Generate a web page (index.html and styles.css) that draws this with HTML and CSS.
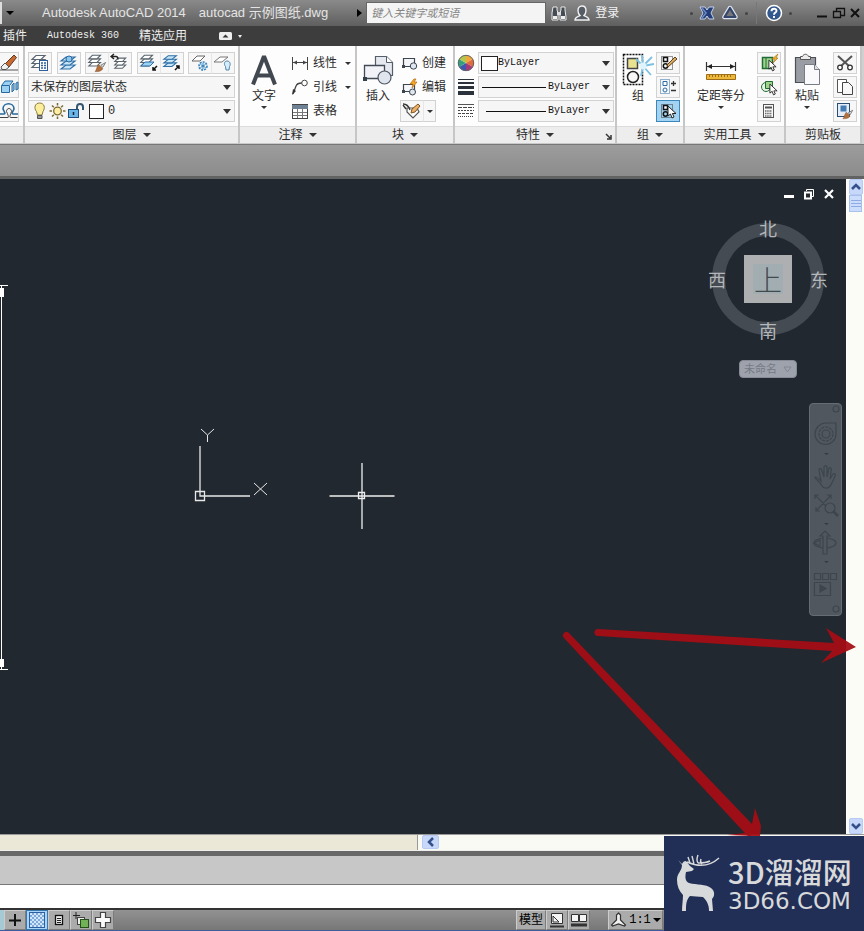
FILE: index.html
```html
<!DOCTYPE html>
<html lang="zh-CN">
<head>
<meta charset="utf-8">
<title>Autodesk AutoCAD 2014</title>
<link rel="stylesheet" href="styles.css">
</head>
<body>
<svg class="defs" aria-hidden="true">
  <symbol id="layers" viewBox="0 0 20 20"><g fill="#fff" stroke="#5a646e" stroke-width="1.2"><path d="M2 14.500h9l4-4H6z"/><path d="M2 10.500h9l4-4H6z"/><path d="M2 6.500h9l4-4H6z"/></g></symbol>
  <symbol id="layers-blue" viewBox="0 0 20 20"><g fill="#c5e4f8" stroke="#2f6fa5" stroke-width="1.200"><path d="M2 15h9l5-4H7z"/><path d="M2 11h9l5-4H7z"/><path d="M2 7h9l5-4H7z"/></g></symbol>
  <symbol id="brush" viewBox="0 0 20 20"><path d="M11 9l3 3 4-7z" fill="#ddd" stroke="#555"/><path d="M8 8l6 6c-2 4-7 4-11 4 2-2 2-6 5-10z" fill="#b3703c" stroke="#7c4a22" stroke-width=".7"/></symbol>
  <symbol id="cursor" viewBox="0 0 10 14"><path d="M1 1v10l2.500-2L5 13l2-1-1.600-3.500H9z" fill="#fff" stroke="#222"/></symbol>
</svg>

<header class="titlebar">
  <span class="sliver"></span>
  <button class="plain quick" aria-label="自定义快速访问工具栏"><i class="tri black"></i></button>
  <h1 class="app-title"><span>Autodesk AutoCAD 2014</span><span>autocad 示例图纸.dwg</span></h1>
  <i class="tri-right"></i>
  <input class="search" type="text" placeholder="键入关键字或短语" aria-label="搜索">
  <button class="plain tool" aria-label="查找"><svg width="18" height="18" viewBox="0 0 18 18"><path d="M3 3h4v3l1 3v7H2V9zM11 3h4v3l1 7v3h-6V9l1-3z" fill="#444b55" stroke="#e8e8e8"/><path d="M7 8h4v3H7z" fill="#ddd"/><path d="M3 12h4v3H3zM11 12h4v3h-4z" fill="#eee"/></svg></button>
  <button class="plain login"><svg width="16" height="18" viewBox="0 0 16 18"><path d="M8 2c3 0 4 2 4 4.500S10.500 11 10 11.500c2 1 5 1.500 5 4.500H1c0-3 3-3.500 5-4.500C5.500 11 4 9 4 6.500S5 2 8 2z" fill="#555c66" stroke="#f0f0f0" stroke-width="1.400"/></svg>登录</button>
  <div class="window-tools">
    <i class="dot"></i>
    <button class="plain tool" aria-label="Exchange"><svg width="16" height="16" viewBox="0 0 16 16"><path d="M1 2h5l2 3 2-3h5l-3 6 3 6h-5l-2-3-2 3H1l3-6z" fill="#243e78" stroke="#c4d0ea"/><path d="M3 3l4 5-4 5" fill="none" stroke="#6f8bc6" stroke-width="1.500"/></svg></button>
    <button class="plain tool" aria-label="保持连接"><svg width="18" height="16" viewBox="0 0 18 16"><path d="M9 3L3.500 12h11z" fill="none" stroke="#dfe5f0" stroke-width="4.500" stroke-linejoin="round"/><path d="M9 3L3.500 12h11z" fill="#777" stroke="#34466b" stroke-width="2.200" stroke-linejoin="round"/></svg></button>
    <i class="dot"></i>
    <i class="divider"></i>
    <button class="plain tool" aria-label="帮助"><svg width="18" height="18" viewBox="0 0 18 18"><circle cx="9" cy="9" r="7.500" fill="#31578d" stroke="#fff" stroke-width="1.500"/><path d="M6.500 7.200C6.500 3.800 11.700 4 11.500 7c-.1 1.600-2.500 1.700-2.500 3.700M9 12v2" fill="none" stroke="#fff" stroke-width="1.900"/></svg></button>
    <i class="dot"></i>
    <div class="window-buttons">
      <button class="plain" aria-label="最小化"><svg width="12" height="14" viewBox="0 0 12 14"><path d="M1 10.500h10" stroke="#111" stroke-width="2"/></svg></button>
      <button class="plain" aria-label="还原"><svg width="14" height="14" viewBox="0 0 14 14"><path d="M4.500 5V2.500h8v7H9M1.500 5.500h7v6h-7z" fill="none" stroke="#111" stroke-width="1.300"/></svg></button>
      <button class="plain" aria-label="关闭"><svg width="10" height="14" viewBox="0 0 10 14"><path d="M1 3l8 8M9 3l-8 8" stroke="#111" stroke-width="2"/></svg></button>
    </div>
  </div>
</header>

<nav class="tabs">
  <a href="#plugins">插件</a>
  <a href="#a360" class="mono">Autodesk 360</a>
  <a href="#apps">精选应用</a>
  <button class="plain collapse" aria-label="最小化功能区"><svg width="13" height="8" viewBox="0 0 13 8"><rect width="13" height="8" rx="1.500" fill="#eee"/><path d="M3.500 5.500h6l-3-3z" fill="#333"/></svg><i class="tri white"></i></button>
</nav>

<main class="ribbon">
  <section class="panel clipped">
    <div class="body">
      <div class="rows">
        <button class="tile" aria-label="删除"><svg width="20" height="20" viewBox="0 0 20 20"><path d="M0 17h19" stroke="#555"/><path d="M6 11l9-9 2.500 2.500L10 14z" fill="#c9682f" stroke="#5d3a24"/><path d="M2 14l4-4 4 4-3 2.500H3z" fill="#f2f2f2" stroke="#555"/></svg></button>
        <button class="tile" aria-label="三维"><svg width="20" height="20" viewBox="0 0 20 20"><path d="M2.500 8.500h8v7h-8zM3 8l3-4h8l-3 4" fill="#9bd0f3" stroke="#27699d"/><path d="M13 8l2-2v7l-2 2zM17 6l2-1v7l-2 1z" fill="#9bd0f3" stroke="#27699d"/></svg></button>
        <button class="tile" aria-label="偏移"><svg width="20" height="20" viewBox="0 0 20 20"><path d="M0 13h5c2 0 0-3-1-5 0-7 11-7 11 0-1 2-3 5-1 5h5" fill="none" stroke="#27699d" stroke-width="1.600"/><path d="M0 16.500h9c1 0 0-3-1.500-6 0-4 5-4 5 0-1 3-2.500 6-1 6h7" fill="none" stroke="#444"/></svg></button>
      </div>
    </div>
    <h2 class="caption"></h2>
  </section>

  <section class="panel">
    <div class="body">
      <div class="rows">
        <div class="layer-tools">
          <button class="tile" aria-label="图层特性"><svg width="20" height="20" viewBox="0 0 20 20"><use href="#layers" width="20" height="20"/><rect x="9.500" y="7.500" width="8" height="10" fill="#fff" stroke="#2f5f99"/><path d="M11 10h2m1 0h2M11 12.500h2m1 0h2M11 15h2m1 0h2" stroke="#2f5f99" stroke-width="1.300"/></svg></button>
          <button class="tile" aria-label="置为当前"><svg width="20" height="20" viewBox="0 0 20 20"><use href="#layers-blue" width="20" height="20" y="1"/><circle cx="10" cy="6" r="3" fill="#8cc7ef" stroke="#2b689c"/></svg></button>
          <span class="pair"><button class="tile" aria-label="匹配图层"><svg width="20" height="20" viewBox="0 0 20 20"><use href="#layers" width="18" height="18"/><use href="#brush" x="6" y="6" width="14" height="14"/></svg></button><button class="tile" aria-label="上一个"><svg width="20" height="20" viewBox="0 0 20 20"><use href="#layers" x="3" y="3" width="17" height="17"/><path d="M1 3.500h5q2 0 2 3M4 1L1 3.500 4 6" fill="none" stroke="#222" stroke-width="1.400"/></svg></button></span>
          <span class="pair"><button class="tile" aria-label="隔离"><svg width="20" height="20" viewBox="0 0 20 20"><use href="#layers" width="18" height="18"/><path d="M2 13h9l4-4H6z" fill="#9bd2f5" stroke="#2f6fa5"/><path d="M18 13l-4 4m0-3v3h3" fill="none" stroke="#111" stroke-width="1.500"/></svg></button><button class="tile" aria-label="取消隔离"><svg width="20" height="20" viewBox="0 0 20 20"><use href="#layers-blue" width="18" height="18"/><path d="M13 17l4-4m0 3v-3h-3" fill="none" stroke="#111" stroke-width="1.500"/></svg></button></span>
          <span class="pair"><button class="tile" aria-label="冻结"><svg width="20" height="20" viewBox="0 0 20 20"><path d="M2 8h8l5-5H7z" fill="#fff" stroke="#666"/><circle cx="13" cy="13" r="4" fill="#e4f4ff" stroke="#3a82b8" stroke-width="1.600" stroke-dasharray="2 1"/><path d="M13 10v6M10.500 11.500l5 3M15.500 11.500l-5 3" stroke="#3a82b8"/></svg></button><button class="tile" aria-label="关闭图层"><svg width="20" height="20" viewBox="0 0 20 20"><path d="M1 9h8l6-5H7z" fill="#fff" stroke="#777"/><path d="M14 8c3 0 4 3 2.500 5.500L16 17h-3l-.5-3.500C10.500 11 11.500 8 14 8z" fill="#d5edfc" stroke="#5685a8"/></svg></button></span>
        </div>
        <div class="combo"><select aria-label="图层状态"><option>未保存的图层状态</option></select></div>
        <div class="combo">
          <svg width="17" height="20" viewBox="0 0 17 20"><path d="M8.500 2c5 0 6 5 3.500 8.500L11 14H6.500L5.500 10.500C2.500 7 4 2 8.500 2z" fill="#fbee9c" stroke="#8a7a3a"/><path d="M6.500 14.500h4.500v3H6.500z" fill="#999" stroke="#555"/></svg>
          <svg width="19" height="20" viewBox="0 0 19 20"><circle cx="9.500" cy="10" r="3.800" fill="#fdeea4" stroke="#7d6a33" stroke-width="1.300"/><path d="M9.500 2v2.500M9.500 15.500V18M1.500 10H4M15 10h2.500M4 4.500l1.800 1.800M13.200 13.700L15 15.500M15 4.500l-1.800 1.800M5.800 13.700L4 15.500" stroke="#7d6a33" stroke-width="1.500"/></svg>
          <svg width="18" height="20" viewBox="0 0 18 20"><path d="M10 9V6c0-4 6-4 6 0v3" fill="none" stroke="#35566f" stroke-width="2"/><rect x="1.500" y="8.500" width="10" height="8" fill="#6bb5e8" stroke="#1f4f78"/><path d="M6.500 11v3" stroke="#123" stroke-width="1.500"/></svg>
          <span class="swatch"></span>
          <select class="mono big" aria-label="图层"><option>0</option></select>
        </div>
      </div>
    </div>
    <h2 class="caption">图层<i class="tri"></i></h2>
  </section>

  <section class="panel">
    <div class="body annotate">
      <button class="plain large"><svg width="30" height="34" viewBox="0 0 30 34"><path d="M4 32.500L14.500 5.500h1L26 32.500M8.500 23.500h13" fill="none" stroke="#42484f" stroke-width="4"/></svg>文字<i class="tri tiny"></i></button>
      <div class="rows">
        <button class="plain line"><svg width="18" height="18" viewBox="0 0 18 18"><path d="M1.500 3v13M16.500 3v13M2 8.500h14" stroke="#444"/><path d="M2 8.500l4-2v4zM16 8.500l-4-2v4z" fill="#444"/></svg>线性<i class="tri tiny"></i></button>
        <button class="plain line"><svg width="18" height="18" viewBox="0 0 18 18"><path d="M2 16L5 8q1-3 6-3" fill="none" stroke="#444" stroke-width="1.300"/><circle cx="13.500" cy="5" r="2.800" fill="#fff" stroke="#444"/><path d="M1 17l1-6 3 2z" fill="#333"/></svg>引线<i class="tri tiny"></i></button>
        <button class="plain line"><svg width="18" height="18" viewBox="0 0 18 18"><rect x="1.500" y="2.500" width="15" height="14" fill="#fff" stroke="#444"/><path d="M1 3h16v4H1z" fill="#6e8195"/><path d="M2 10.500h14M2 13.500h14M6.500 7v9M11.500 7v9" stroke="#777"/></svg>表格</button>
      </div>
    </div>
    <h2 class="caption">注释<i class="tri"></i></h2>
  </section>

  <section class="panel">
    <div class="body block">
      <button class="plain large"><svg width="34" height="34" viewBox="0 0 34 34"><path d="M14.500 4.500h11l6 6v13h-17z" fill="#e7e9f1" stroke="#555e68" stroke-width="1.200"/><path d="M25.500 4.500v6h6" fill="#fff" stroke="#555e68"/><path d="M3.500 13.500h20v13h-20z" fill="#f2f3f8" stroke="#424b55" stroke-width="1.300"/><circle cx="23.500" cy="25.500" r="6.500" fill="#e1e5ee" stroke="#4e5864" stroke-width="1.200"/><path d="M2 25h4v4H2z" fill="#34404c"/></svg>插入</button>
      <div class="rows">
        <button class="plain line"><svg width="18" height="18" viewBox="0 0 18 18"><path d="M3.500 4.500h11v8h-11z" fill="#f4f6fa" stroke="#3c4650" stroke-width="1.200"/><circle cx="13.500" cy="12" r="3.200" fill="#dfe6ef" stroke="#3c4650"/><path d="M2 11h3v3H2z" fill="#3c4650"/></svg>创建</button>
        <button class="plain line"><svg width="18" height="18" viewBox="0 0 18 18"><path d="M3.500 6.500h11v7h-11z" fill="#f4f6fa" stroke="#3c4650" stroke-width="1.200"/><circle cx="12.500" cy="14" r="3" fill="#dfe6ef" stroke="#3c4650"/><path d="M2 12h3v3H2z" fill="#3c4650"/><path d="M14 1l-4 5h3l-1 4 5-6h-3l2-3z" fill="#f7a928" stroke="#b56b10" stroke-width=".7"/></svg>编辑</button>
        <span class="pair"><button class="tile" aria-label="编辑属性"><svg width="20" height="20" viewBox="0 0 20 20"><path d="M5 7h10l2 4-6 6-6-6z" fill="#fff" stroke="#555" stroke-width="1.200"/><path d="M1 3q5 0 7 6M1 4l3 4" fill="none" stroke="#333" stroke-width="1.300"/><path d="M9 12l1-4 6-5 2 2-5 6z" fill="#e9b06b" stroke="#85521d"/></svg></button><button class="tile narrow" aria-label="更多"><i class="tri tiny"></i></button></span>
      </div>
    </div>
    <h2 class="caption">块<i class="tri"></i></h2>
  </section>

  <section class="panel">
    <div class="body rows props">
      <div class="prop"><svg width="18" height="20" viewBox="0 0 18 20"><g transform="translate(9 11)"><path d="M0 0V-8A8 8 0 0 1 7-4z" fill="#f0a83c"/><path d="M0 0L7-4A8 8 0 0 1 7 4z" fill="#e36b36"/><path d="M0 0l7 4a8 8 0 0 1-7 4z" fill="#a63a78"/><path d="M0 0v8a8 8 0 0 1-7-4z" fill="#3e58b0"/><path d="M0 0l-7 4a8 8 0 0 1 0-8z" fill="#33a17c"/><path d="M0 0l-7-4A8 8 0 0 1 0-8z" fill="#b3c64b"/><circle r="7.700" fill="none" stroke="#62656d"/></g></svg><div class="combo"><span class="swatch"></span><select class="mono" aria-label="颜色"><option>ByLayer</option></select></div></div>
      <div class="prop"><svg width="18" height="20" viewBox="0 0 18 20"><path d="M1 3.500h16" stroke="#2c323b"/><path d="M1 7h16" stroke="#2c323b" stroke-width="2"/><path d="M1 11.500h16" stroke="#2c323b" stroke-width="3"/><path d="M1 17h16" stroke="#2c323b" stroke-width="4"/></svg><div class="combo"><span class="stroke"></span><select class="mono" aria-label="线宽"><option>ByLayer</option></select></div></div>
      <div class="prop"><svg width="18" height="20" viewBox="0 0 18 20"><path d="M1 4.500h16" stroke="#555"/><path d="M1 7.500h16" stroke="#444" stroke-dasharray="4 1"/><path d="M1 10.500h16" stroke="#444" stroke-dasharray="2 1"/><path d="M1 13.500h16" stroke="#444" stroke-dasharray="3 1"/><path d="M1 16.500h16" stroke="#444" stroke-dasharray="1 1"/></svg><div class="combo"><span class="stroke inset"></span><select class="mono" aria-label="线型"><option>ByLayer</option></select></div></div>
    </div>
    <h2 class="caption">特性<i class="tri"></i><svg class="launcher" width="7" height="7" viewBox="0 0 7 7"><path d="M1 1l4 4M6 2v4H2" fill="none" stroke="#333" stroke-width="1.500"/></svg></h2>
  </section>

  <section class="panel">
    <div class="body split">
      <button class="plain large"><svg width="32" height="34" viewBox="0 0 32 34"><path d="M1.500 2.500h19v30h-19z" fill="none" stroke="#111" stroke-width="1.500" stroke-dasharray="2 1"/><rect x="5.500" y="6.500" width="10" height="10" fill="#e8e291" stroke="#444" stroke-width="1.500"/><circle cx="11" cy="25" r="5.500" fill="#f7f7f7" stroke="#222" stroke-width="1.500"/><path d="M21 14l9-9M21 14l11-2M21 14l8 9M21 14l-1-11M21 14l-2 10M21 14l-7-7" stroke="#7cc0e2" stroke-width="1.800"/><circle cx="21" cy="14" r="3.500" fill="#dff4fd"/></svg>组</button>
      <div class="rows">
        <button class="tile" aria-label="取消编组"><svg width="20" height="20" viewBox="0 0 20 20"><path d="M3.500 3.500h11v13h-11z" fill="none" stroke="#333" stroke-dasharray="1 1"/><path d="M5.500 4.500h4v4h-4z" fill="#fff" stroke="#111" stroke-width="1.500"/><circle cx="7.500" cy="13" r="2.200" fill="none" stroke="#111" stroke-width="1.500"/><path d="M9 12L17 4l2 2-9 8z" fill="#d9ab63" stroke="#5e421d"/></svg></button>
        <button class="tile" aria-label="组编辑"><svg width="20" height="20" viewBox="0 0 20 20"><path d="M2.500 2.500h9v14h-9z" fill="none" stroke="#2c6ba3" stroke-dasharray="1 1"/><path d="M5 4.500h4v4H5z" fill="#fff" stroke="#2c6ba3"/><circle cx="7" cy="13" r="2" fill="none" stroke="#2c6ba3"/><path d="M13 6.500h5M15.500 4v5M13 13.500h5" stroke="#333" stroke-width="1.300"/></svg></button>
        <button class="tile active" aria-label="启用组选择"><svg width="20" height="20" viewBox="0 0 20 20"><path d="M3.500 3.500h11v13h-11z" fill="none" stroke="#333" stroke-dasharray="1 1"/><path d="M5.500 4.500h4v4h-4z" fill="#fff" stroke="#111" stroke-width="1.500"/><circle cx="7.500" cy="13" r="2.200" fill="none" stroke="#111" stroke-width="1.500"/><use href="#cursor" x="9" y="4" width="10" height="14"/></svg></button>
      </div>
    </div>
    <h2 class="caption">组<i class="tri"></i></h2>
  </section>

  <section class="panel">
    <div class="body split">
      <button class="plain large wide"><svg width="34" height="34" viewBox="0 0 34 34"><path d="M2.500 10v9M31.500 10v9M3 14.500h28" stroke="#333" stroke-width="1.200"/><path d="M3 14.500l5-2.500v5zM31 14.500l-5-2.500v5z" fill="#222"/><path d="M2.500 22.500h29v5h-29z" fill="#ecb73b" stroke="#9d6d18"/><path d="M5.500 23v2m3-2v2m3-2v2m3-2v2m3-2v2m3-2v2m3-2v2m3-2v2" stroke="#99701e"/></svg>定距等分<i class="tri tiny"></i></button>
      <div class="rows">
        <button class="tile" aria-label="快速选择"><svg width="20" height="20" viewBox="0 0 20 20"><path d="M3.500 4.500h10v11h-10z" fill="#9ed38c" stroke="#236b36" stroke-width="1.500"/><path d="M7 5v10" stroke="#236b36"/><use href="#cursor" x="9" y="6" width="9" height="13"/><path d="M19 1l-6 5h3l-2 4 5-5h-2z" fill="#f5b32d" stroke="#a66c12" stroke-width=".6"/></svg></button>
        <button class="tile" aria-label="全部选择"><svg width="20" height="20" viewBox="0 0 20 20"><circle cx="7" cy="10" r="4.500" fill="#e5f4df" stroke="#236b36"/><path d="M6.500 4.500h7v7h-7z" fill="#9ed38c" stroke="#236b36"/><use href="#cursor" x="10" y="6" width="9" height="13"/></svg></button>
        <button class="tile" aria-label="计算器"><svg width="20" height="20" viewBox="0 0 20 20"><rect x="4.500" y="3.500" width="10" height="13" fill="#f8f8f8" stroke="#555"/><path d="M6 6.500h7" stroke="#555" stroke-width="2"/><path d="M6 10h7M6 12.500h7M6 15h7" stroke="#666" stroke-width="1.300" stroke-dasharray="1.500 .7"/></svg></button>
      </div>
    </div>
    <h2 class="caption">实用工具<i class="tri"></i></h2>
  </section>

  <section class="panel">
    <div class="body split">
      <button class="plain large"><svg width="30" height="34" viewBox="0 0 30 34"><path d="M3.500 5.500h20v25h-20z" fill="#9a9da3" stroke="#4c4f55" stroke-width="1.200"/><path d="M8.500 7.500v-3h2c1-3 5-3 6 0h2v3z" fill="#ececec" stroke="#555"/><path d="M12.500 12.500h10l5 5v15h-15z" fill="#fafafc" stroke="#777c85"/><path d="M22.500 12.500v5h5" fill="#dfe1e6" stroke="#777c85"/></svg>粘贴<i class="tri tiny"></i></button>
      <div class="rows">
        <button class="tile" aria-label="剪切"><svg width="20" height="20" viewBox="0 0 20 20"><path d="M3 3l11 10M17 3L6 13" stroke="#555" stroke-width="2"/><circle cx="5" cy="14.500" r="2.300" fill="#fff" stroke="#333" stroke-width="1.300"/><circle cx="15" cy="14.500" r="2.300" fill="#fff" stroke="#333" stroke-width="1.300"/></svg></button>
        <button class="tile" aria-label="复制"><svg width="20" height="20" viewBox="0 0 20 20"><path d="M2.500 2.500h9v13h-9z" fill="#fff" stroke="#555"/><path d="M7.500 5.500h6l4 4v8h-10z" fill="#f8f8f8" stroke="#444"/></svg></button>
        <button class="tile" aria-label="特性匹配"><svg width="20" height="20" viewBox="0 0 20 20"><rect x="2.500" y="2.500" width="12" height="13" fill="#e5eef8" stroke="#2a4d75"/><rect x="5.500" y="4.500" width="6" height="6" fill="#447bb3"/><use href="#brush" x="5" y="6" width="15" height="13"/></svg></button>
      </div>
    </div>
    <h2 class="caption">剪贴板</h2>
  </section>
</main>

<div class="shelf"></div>

<div class="workspace">
  <div class="canvas">
    <svg class="dimension" width="9" height="388" viewBox="0 0 9 388"><path d="M0 1.500h8M0 385.500h8M1.500 1v385" stroke="#fff"/><path d="M0 13h4V4H0zM0 375h4v8H0z" fill="#fff"/></svg>
    <svg class="ucs" width="80" height="78" viewBox="0 0 80 78"><g fill="none" stroke="#e8e8e8"><path d="M8 20v50h50M3.500 65.500h9v9h-9z" stroke-width="1.300"/><path d="M9 3l6.500 6L22 3M15.500 9v7M62 57l13 12M75 57L62 69"/></g></svg>
    <svg class="crosshair" width="66" height="66" viewBox="0 0 66 66"><path d="M.5 33h65M33 0v66M29.500 29.500h6v6h-6z" fill="none" stroke="#eee" stroke-width="1.300"/></svg>

    <div class="doc-buttons">
      <button class="plain" aria-label="最小化图形"><svg width="12" height="12" viewBox="0 0 12 12"><path d="M1 7h10v3H1z" fill="#fff"/></svg></button>
      <button class="plain" aria-label="还原图形"><svg width="12" height="12" viewBox="0 0 12 12"><path d="M3.500 3V1.500h7v7H9" fill="none" stroke="#fff"/><path d="M2 4.500h6v6H2z" fill="none" stroke="#fff" stroke-width="2"/></svg></button>
      <button class="plain" aria-label="关闭图形"><svg width="12" height="12" viewBox="0 0 12 12"><path d="M2 2l8 8M10 2l-8 8" stroke="#fff" stroke-width="2.200"/></svg></button>
    </div>

    <div class="viewcube">
      <div class="ring"></div>
      <span class="north">北</span><span class="west">西</span><button class="plain face">上</button><span class="east">东</span><span class="south">南</span>
    </div>
    <button class="ucs-name">未命名 <svg width="9" height="7" viewBox="0 0 9 7"><path d="M1 1h7L4.500 6z" fill="none" stroke="#828791"/></svg></button>

    <div class="navbar">
      <svg width="31" height="211" viewBox="0 0 31 211"><g fill="none" stroke="#3d454d" stroke-width="1.200"><circle cx="26" cy="5" r="3"/><path d="M5 30a11 11 0 0 1 11-11h10v11a10.500 10.500 0 0 1-21 0z"/><circle cx="16" cy="30" r="7" stroke-dasharray="3 1"/><circle cx="16" cy="30" r="4"/><path d="M12 82c-2-5-6-5-7-9 3 0 5 3 6 4l-2-11c0-2 2-2 3 1l2 6V63c1-2 3-2 3 1v9l2-9c2-1 3 1 2 3l-1 8 3-5c2-1 3 0 2 2-2 4-3 9-6 11-2 2-6 1-7-1z"/><path d="M5 91l15 15M21 91L6 107M5 95v-4h4M17 91h4v4M6 103v4h4"/><circle cx="20" cy="104" r="5" fill="#50575e"/><path d="M23 107l5 5" stroke-width="2.500"/><ellipse cx="15" cy="139" rx="11" ry="5"/><path d="M13 150v-18h-3l5-5 5 5h-3v18z" fill="#50575e"/><path d="M4 139l6-3v6z"/><path d="M4.500 169.500h6v6h-6zM12.500 169.500h6v6h-6zM20.500 169.500h6v6h-6zM4.500 178.500h16v13h-16z"/><path d="M10 181v7l6-3.500z" fill="#3d454d"/><circle cx="26" cy="205" r="3"/></g><path d="M14 49h5l-2.500 2zM14 119h5l-2.500 2zM14 157h5l-2.500 2z" fill="#343b42"/></svg>
    </div>
  </div>
  <div class="vscroll">
    <button class="plain cap" aria-label="向上滚动"><svg width="12" height="12" viewBox="0 0 12 12"><path d="M2 8l4-4 4 4" fill="none" stroke="#34518a" stroke-width="2.500"/></svg></button>
    <button class="plain thumb" aria-label="滚动条"><svg width="10" height="10" viewBox="0 0 10 10"><path d="M0 1.500h10M0 4.500h10M0 7.500h10" stroke="#8fabe3"/></svg></button>
    <button class="plain cap last" aria-label="向下滚动"><svg width="12" height="12" viewBox="0 0 12 12"><path d="M2 4l4 4 4-4" fill="none" stroke="#34518a" stroke-width="2.500"/></svg></button>
  </div>
</div>

<div class="hscroll">
  <div class="sheet-tabs"></div>
  <div class="track"><button class="plain cap" aria-label="向左滚动"><svg width="12" height="12" viewBox="0 0 12 12"><path d="M8 2L4 6l4 4" fill="none" stroke="#34518a" stroke-width="2.500"/></svg></button></div>
</div>

<div class="history"></div>
<input class="command" type="text" aria-label="命令行">

<footer class="status">
  <span class="edge"></span>
  <button class="cell" aria-label="正交"><svg width="18" height="18" viewBox="0 0 18 18"><path d="M3 9.500h12M9 3v12" stroke="#111" stroke-width="2"/></svg></button>
  <button class="cell on" aria-label="透明度"><svg width="18" height="18" viewBox="0 0 18 18"><rect x="1.500" y="1.500" width="15" height="15" fill="#cfe5fb" stroke="#2b5fa0"/><path d="M2 6l4-4M2 10l8-8M2 14l12-12M4 16L16 4M8 16l8-8M12 16l4-4M2 12l4 4M2 8l8 8M2 4l12 12M4 2l12 12M8 2l8 8M12 2l4 4" stroke="#80a9d8"/></svg></button>
  <button class="cell" aria-label="快捷特性"><svg width="18" height="18" viewBox="0 0 18 18"><rect x="5.500" y="4.500" width="7" height="9" fill="#eee" stroke="#111" stroke-width="1.300"/><path d="M7 7.500h4M7 9.500h4M7 11.500h4" stroke="#222"/></svg></button>
  <button class="cell" aria-label="选择循环"><svg width="18" height="18" viewBox="0 0 18 18"><path d="M4 1v7M1 4.500h7" stroke="#222"/><rect x="5.500" y="6.500" width="7" height="7" fill="#eee" stroke="#444"/><rect x="8.500" y="8.500" width="8" height="8" fill="#72b257" stroke="#254f1d"/></svg></button>
  <button class="cell" aria-label="注释监视器"><svg width="18" height="18" viewBox="0 0 18 18"><path d="M6.500 1.500h5v5h5v5h-5v5h-5v-5h-5v-5h5z" fill="#fafafa" stroke="#444" stroke-width="1.200"/></svg></button>
  <div class="right-cells">
    <button class="cell model">模型</button>
    <button class="cell" aria-label="布局"><svg width="18" height="18" viewBox="0 0 18 18"><path d="M3.500 2.500h11v10h-11z" fill="#f5f5f5" stroke="#333"/><path d="M5 5l6 6H5z" fill="none" stroke="#333"/><path d="M2 15.500h14" stroke="#333" stroke-width="2"/></svg></button>
    <button class="cell" aria-label="快速查看"><svg width="18" height="18" viewBox="0 0 18 18"><path d="M1.500 3.500h7v7h-7zM9.500 3.500h7v7h-7z" fill="#f5f5f5" stroke="#333"/><path d="M1 14h16" stroke="#333" stroke-width="3"/></svg></button>
    <button class="cell scale"><svg width="17" height="18" viewBox="0 0 17 18"><path d="M8.500 2l2 2v5l5 5-1 1-6-2-6 2-1-1 5-5V4z" fill="#f0f0f0" stroke="#333" stroke-width="1.200"/></svg>1:1<i class="tri black"></i></button>
  </div>
</footer>

<svg class="pointers" width="304" height="216" viewBox="0 0 304 216" aria-hidden="true"><g fill="#a50d14" fill-opacity=".94"><path d="M9 13a3.500 3.500 0 0 0-5 5L183 211l5 5h12l1-10-6-18-3 16z"/><path d="M167 215l18-2 8 3z"/><path d="M38 9a3.500 3.500 0 0 0 0 7l234 15-11 12 35-16-30-19 8 15z"/></g></svg>

<aside class="brand">
  <svg width="60" height="75" viewBox="0 0 60 75"><path d="M10 14l4 4c1-2 2-3 4-3l4 5 4 3-2 2-6 1c-1 5-1 9 3 11 8 2 17 1 22 5 4 3 4 8 1 11l1 12h-4c0-6-2-10-6-14-5 0-9-1-13-1-4 4-4 9-4 15h-4c0-6 1-11 1-16-4-4-6-9-6-15 0-7 5-9 5-15z" fill="#d8d9da"/><path d="M19 16c9 4 21 6 32-4M22 17l-2-6M26 18l-2-8M30 17c-2-3-1-5 0-8M34 18c-2-2-2-3-1-5M30 17c4 0 8 0 12-2" fill="none" stroke="#d8d9da" stroke-width="1.400"/></svg>
  <div class="brand-text"><strong>3D溜溜网</strong><span>3D66.COM</span></div>
</aside>
</body>
</html>
```
FILE: styles.css
```css
* { box-sizing: border-box; }

body {
  margin: 0;
  min-height: 100vh;
  display: flex;
  flex-direction: column;
  position: relative;
  overflow-x: hidden;
  background: #6b6b6b;
  color: #2c2c2c;
  font: 12px/16px "Liberation Sans", "Noto Sans CJK SC", sans-serif;
}

button, input, select { font: inherit; color: inherit; margin: 0; border-radius: 0; }
svg { display: block; flex: none; }
.defs { position: absolute; width: 0; height: 0; }

.plain {
  padding: 0;
  border: 0;
  background: none;
  display: flex;
  align-items: center;
}

.mono { font-family: "Liberation Mono", "Noto Sans CJK SC", monospace; font-size: 10px; }

.tri {
  border: 4px solid transparent;
  border-top: 4px solid #333;
  border-bottom: 0;
}
.tri.black { border-top-color: #000; }
.tri.white { border-width: 3px 2px 0; border-top-color: #eee; }
.tri.tiny { border-width: 3px 3px 0; }
.tri-right { border: 4px solid transparent; border-left: 5px solid #000; border-right: 0; }

/* Title bar */
.titlebar {
  height: 26px;
  display: flex;
  align-items: center;
  background: linear-gradient(#8a8a8a, #5f5f5f);
}
.sliver { width: 2px; height: 22px; background: #ddd; }
.quick { padding: 0 4px; }
.app-title {
  margin: 0 29px 0 24px;
  display: flex;
  gap: 13px;
  color: #e4e4e4;
  font-size: 13px;
  font-weight: 400;
  white-space: nowrap;
}
.search {
  width: 180px;
  height: 22px;
  margin: 0 4px;
  padding: 0 4px;
  border: 1px solid #666;
  background: #f4f4f4;
  font-size: 11px;
  font-style: italic;
}
.search::placeholder { color: #858585; }
.tool { flex: none; }
.login { margin-left: 6px; gap: 5px; color: #f2f2f2; white-space: nowrap; }
.window-tools {
  margin-left: auto;
  padding-right: 4px;
  display: flex;
  align-items: center;
  gap: 6px;
}
.dot { width: 3px; height: 3px; border-radius: 2px; background: #444; }
.divider { width: 1px; height: 22px; margin: 0 2px; background: #777; }
.window-buttons { margin-left: 18px; display: flex; gap: 4px; }

/* Tab strip */
.tabs {
  height: 20px;
  padding-left: 3px;
  display: flex;
  align-items: center;
  gap: 20px;
  background: #3d3d3d;
  color: #eee;
}
.tabs a { color: inherit; text-decoration: none; }
.collapse { margin-left: 12px; gap: 6px; }

/* Ribbon */
.ribbon {
  padding-right: 2px;
  display: grid;
  grid-template-columns: 25fr 215fr 117fr 98fr 162fr 68fr 101fr 76fr;
  background: #d0d0d0;
}
.panel {
  min-width: 0;
  overflow: hidden;
  border-right: 2px solid #c6c6c6;
  background: #fdfdfd;
}
.body { height: 80px; padding: 6px 3px 0; }
.clipped .body { padding: 6px 0 0; }
.clipped .rows { align-items: flex-start; }
.clipped .tile { border-left: 0; width: 19px; }
.rows { display: flex; flex-direction: column; gap: 2px; min-width: 0; }
.caption {
  position: relative;
  height: 18px;
  margin: 0;
  display: flex;
  align-items: center;
  justify-content: center;
  gap: 6px;
  border-top: 1px solid #dcdcdc;
  border-bottom: 1px solid #c9c9c9;
  background: #ededed;
  font-size: 12px;
  font-weight: 400;
}
.launcher { position: absolute; right: 3px; bottom: 3px; }

.tile {
  width: 24px;
  height: 22px;
  padding: 0;
  display: flex;
  align-items: center;
  justify-content: center;
  flex: none;
  border: 1px solid #d2d2d2;
  background: #f7f7f7;
}
.tile.narrow { width: 13px; }
.tile.active { border-color: #3b86bd; background: #a4d3f2; }
.pair { display: flex; }
.pair .tile + .tile { border-left-color: #e6e6e6; margin-left: -1px; }
.layer-tools { display: flex; justify-content: space-between; }

.combo {
  position: relative;
  height: 22px;
  padding-left: 2px;
  display: flex;
  align-items: center;
  flex: 1;
  min-width: 0;
  border: 1px solid #d2d2d2;
  background: #f6f6f6;
}
.rows > .combo { flex: none; }
.combo::after {
  content: "";
  position: absolute;
  right: 3px;
  border: 4px solid transparent;
  border-top: 5px solid #333;
  border-bottom: 0;
  pointer-events: none;
}
.combo select {
  appearance: none;
  flex: 1;
  min-width: 0;
  height: 20px;
  padding: 0;
  border: 0;
  background: none;
}
.combo .big { padding-left: 4px; font-size: 12px; }
.swatch { width: 17px; height: 15px; flex: none; border: 1px solid #222; background: #fff; }
.combo svg + .swatch { margin-left: 4px; width: 15px; }
.stroke { width: 64px; height: 1px; margin: 0 2px 0 1px; flex: none; background: #111; }
.stroke.inset { width: 60px; margin-left: 5px; }
.prop { display: flex; gap: 3px; }
.prop .mono { font-size: 10px; color: #111; }
.props.body { padding: 6px 1px 0 2px; }

.annotate, .block, .split { display: flex; justify-content: space-between; }
.annotate { justify-content: flex-start; gap: 6px; }
.annotate .rows { flex: 1; }
.block { justify-content: flex-start; gap: 4px; }
.large { width: 42px; flex-direction: column; line-height: 14px; white-space: nowrap; align-self: flex-start; gap: 3px; }
.block .large { width: 36px; }
.split .large { width: 36px; }
.split .wide { width: 66px; }
.line { height: 22px; gap: 4px; white-space: nowrap; }
.line .tri { margin-left: auto; margin-right: 1px; }

/* Strip between ribbon and drawing */
.shelf {
  height: 35px;
  border-top: 1px solid #777;
  border-bottom: 3px solid #626262;
  background: linear-gradient(#9c9c9c, #8c8c8c);
}

/* Drawing area */
.workspace {
  flex: 1;
  min-height: 440px;
  display: flex;
}
.canvas {
  position: relative;
  flex: 1;
  overflow: hidden;
  background: #212830;
}
.dimension { position: absolute; left: 0; top: 105px; }
.ucs { position: absolute; left: 192px; top: 247px; }
.crosshair { position: absolute; left: 329px; top: 284px; }
.doc-buttons { position: absolute; right: 11px; top: 9px; display: flex; gap: 8px; }

.viewcube {
  position: absolute;
  right: 14px;
  top: 36px;
  width: 128px;
  height: 128px;
  display: grid;
  grid-template: 26px 1fr 26px / 26px 1fr 26px;
  place-items: center;
  color: #b4b7ba;
  font: 18px/26px "Noto Sans CJK SC", sans-serif;
}
.ring {
  position: absolute;
  left: 8px;
  top: 8px;
  width: 112px;
  height: 112px;
  border: 13px solid #454b52;
  border-radius: 50%;
}
.viewcube span { position: relative; }
.north, .south { grid-column: 1 / 4; }
.viewcube .face {
  position: relative;
  width: 48px;
  height: 48px;
  justify-content: center;
  border: 9px solid #adafb0;
  background: #a2adb2;
  color: #3f494e;
  font-size: 28px;
  font-weight: 300;
  line-height: 30px;
}
.ucs-name {
  position: absolute;
  right: 49px;
  top: 181px;
  height: 18px;
  padding: 0 4px;
  display: flex;
  align-items: center;
  gap: 6px;
  border: 1px solid #868b95;
  border-radius: 4px;
  background: #9ea2ac;
  color: #747a84;
  font-size: 11px;
  white-space: nowrap;
}
.navbar {
  position: absolute;
  right: 4px;
  top: 224px;
  border: 1px solid #656c73;
  border-radius: 4px;
  background: #50575e;
}

.vscroll {
  width: 18px;
  padding: 0 2px;
  display: flex;
  flex-direction: column;
  border-left: 1px solid #fff;
  background: #fbfcf5;
}
.cap {
  width: 14px;
  height: 16px;
  justify-content: center;
  flex: none;
  border: 1px solid #b7cbf2;
  border-radius: 2px;
  background: #c7d8fb;
}
.thumb { height: 17px; justify-content: center; border: 1px solid #a9c0ee; background: #cbdcfd; }
.vscroll .last { margin-top: auto; }

.hscroll {
  height: 17px;
  display: flex;
  border-top: 1px solid #999;
  border-bottom: 1px solid #eee;
  background: #fafaf4;
}
.sheet-tabs { flex: 0 0 418px; border-right: 1px solid #999; background: #ece8d8; }
.track { flex: 1; padding-left: 4px; }
.track .cap { height: 14px; width: 17px; }

.history { height: 34px; border-top: 5px solid #686868; border-bottom: 1px solid #777; background: #c7c7c7; }
.command { width: 100%; height: 23px; padding: 0 6px; border: 0; background: #fff; }

.status {
  height: 23px;
  padding-right: 201px;
  display: flex;
  border-top: 2px solid #333;
  border-bottom: 1px solid #405d9b;
  background: linear-gradient(#929292, #777);
}
.edge { width: 4px; background: #a5cad5; }
.cell {
  width: 22px;
  padding: 0;
  display: flex;
  align-items: center;
  justify-content: center;
  border: 1px solid #7c7c7c;
  border-top-color: #ccc;
  border-left-color: #ccc;
  background: #ababab;
  color: #000;
  white-space: nowrap;
}
.cell.on { border-color: #3978af; background: #a9d4f7; }
.right-cells { margin-left: auto; display: flex; }
.cell.model { width: 30px; }
.cell.scale { width: 55px; margin-left: 18px; gap: 2px; font: 12px/16px "Liberation Mono", monospace; }

/* Annotation arrows and brand plate lie over the window */
.pointers { position: absolute; right: 0; bottom: 95px; pointer-events: none; }
.brand {
  position: absolute;
  right: 0;
  bottom: 0;
  width: 200px;
  height: 95px;
  padding: 10px 4px;
  display: flex;
  background: #212f57;
  color: #d8d9da;
}
.brand-text { display: flex; flex-direction: column; padding-top: 8px; white-space: nowrap; }
.brand strong { font: 500 29px/34px "Noto Sans CJK SC", sans-serif; }
.brand span { font: 23px/26px "DejaVu Sans", sans-serif; }
```
